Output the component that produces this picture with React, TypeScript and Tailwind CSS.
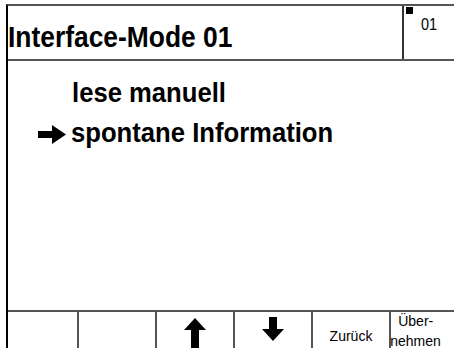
const FootCell = ({ children, last }: { children?: React.ReactNode; last?: boolean }) => (
  <div className={`h-full flex flex-col items-center ${last ? "" : "border-r-2 border-[#555]"}`}>{children}</div>
);

export default function App() {
  return (
    <div className="w-[454px] h-[348px] bg-white overflow-hidden pt-[4px] pl-[6px] font-['Liberation_Sans',Arial,sans-serif] text-black">
      <div className="h-full flex flex-col border-l-2 border-t-2 border-l-black border-t-[#555]">
        {/* Header */}
        <div className="h-[55px] shrink-0 flex border-b-2 border-[#555]">
          <div className="w-[396px] border-r-2 border-[#333] flex items-end pb-[7px] overflow-hidden">
            <span className="inline-block origin-left scale-x-[0.88] text-[30px] font-bold leading-none whitespace-nowrap">
              Interface-Mode 01
            </span>
          </div>
          <div className="relative flex-1">
            <div className="absolute left-[2px] top-[1px] w-[7px] h-[7px] bg-black" />
            <span className="absolute left-[17px] top-[10px] inline-block origin-left scale-x-[0.85] text-[17px] leading-none">
              01
            </span>
          </div>
        </div>

        {/* Body */}
        <div className="flex-1 pt-[12px] pl-[64px]">
          <div className="origin-left scale-x-[0.95] text-[27px] font-bold leading-[40px] whitespace-nowrap">lese manuell</div>
          <div className="flex items-center -ml-[34px] leading-[40px]">
            <svg width="28" height="19" viewBox="0 0 28 19" className="mr-[5px] mt-[3px] shrink-0">
              <path d="M0 6 H14 V0 L28 9.5 L14 19 V13 H0 Z" fill="black" />
            </svg>
            <span className="inline-block origin-left scale-x-[0.95] text-[27px] font-bold whitespace-nowrap">
              spontane Information
            </span>
          </div>
        </div>

        {/* Footer */}
        <div className="h-[38px] shrink-0 grid grid-cols-[71px_78px_78px_78px_78px_1fr] border-t-2 border-[#555]">
          <FootCell />
          <FootCell />
          <FootCell>
            <svg width="22" height="32" viewBox="0 0 22 32" className="mt-[6px]">
              <path d="M11 0 L22 12 H15 V32 H7 V12 H0 Z" fill="black" />
            </svg>
          </FootCell>
          <FootCell>
            <svg width="22" height="24" viewBox="0 0 22 24" className="mt-[5px]">
              <path d="M7 0 H15 V12 H22 L11 24 L0 12 H7 Z" fill="black" />
            </svg>
          </FootCell>
          <FootCell>
            <span className="text-[14px] leading-none mt-[17px]">Zurück</span>
          </FootCell>
          <FootCell last>
            <span className="text-[14px] leading-[20px] -mt-[1px] -ml-[14px] whitespace-nowrap">
              <span className="pl-[8px]">Über-</span>
              <br />
              nehmen
            </span>
          </FootCell>
        </div>
      </div>
    </div>
  );
}
